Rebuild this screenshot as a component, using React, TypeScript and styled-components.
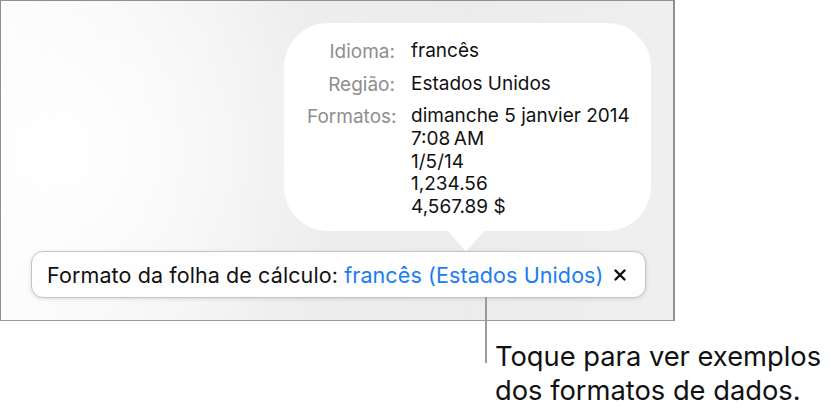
import React from "react";
import styled, { createGlobalStyle } from "styled-components";

const GlobalStyle = createGlobalStyle`
  html, body {
    margin: 0;
    padding: 0;
    background: #ffffff;
  }
  body {
    font-family: Inter, "Liberation Sans", Arial, sans-serif;
    color: #111111;
  }
`;

interface IRow {
  label: string;
  values: string[];
}

const rows: IRow[] = [
  { label: "Idioma:", values: ["francês"] },
  { label: "Região:", values: ["Estados Unidos"] },
  {
    label: "Formatos:",
    values: ["dimanche 5 janvier 2014", "7:08\u2009AM", "1/5/14", "1,234.56", "4,567.89 $"],
  },
];

const CloseIcon = (): JSX.Element => (
  <svg width="12" height="12" viewBox="0 0 12 12">
    <path d="M1.5 1.5 L10.5 10.5 M10.5 1.5 L1.5 10.5" stroke="#111" strokeWidth="2.4" strokeLinecap="round" />
  </svg>
);

const App = (): JSX.Element => {
  return (
    <Page>
      <GlobalStyle />
      <Screen>
        <Bubble>
          {rows.map((row) => (
            <InfoRow key={row.label}>
              <Label>{row.label}</Label>
              <Values>
                {row.values.map((v) => (
                  <Value key={v}>{v}</Value>
                ))}
              </Values>
            </InfoRow>
          ))}
        </Bubble>
        <FormatBar>
          <BarText>
            Formato da folha de cálculo: <Link>francês (Estados Unidos)</Link>
          </BarText>
          <CloseButton>
            <CloseIcon />
          </CloseButton>
        </FormatBar>
      </Screen>
      <Callout>
        Toque para ver exemplos
        <br />
        dos formatos de dados.
      </Callout>
    </Page>
  );
};

const Page = styled.div`
  width: 830px;
  height: 415px;
  overflow: hidden;
  display: flex;
  flex-direction: column;
`;

const Screen = styled.div`
  box-sizing: border-box;
  width: 675px;
  height: 321px;
  border: 1px solid #8f8f8f;
  border-right-width: 2px;
  border-bottom-color: #9a9a9a;
  background:
    radial-gradient(ellipse 280px 280px at 60px 150px, #ffffff 0%, rgba(255, 255, 255, 0) 100%),
    linear-gradient(to right, #fafafa 0%, #eeeeee 40%, #ececec 70%, #efefef 100%);
  display: flex;
  flex-direction: column;
  align-items: flex-start;
  padding: 22px 0 0 283px;
`;

const Bubble = styled.div`
  position: relative;
  box-sizing: border-box;
  width: 367px;
  height: 208px;
  background: #ffffff;
  border-radius: 44px;
  padding: 17px 0 0 23px;
  display: flex;
  flex-direction: column;
  gap: 9.5px;

  &::after {
    content: "";
    position: absolute;
    left: 164px;
    top: 100%;
    width: 36px;
    height: 20px;
    background: #ffffff;
    clip-path: polygon(0 0, 100% 0, 52% 100%, 48% 100%);
  }
`;

const InfoRow = styled.div`
  display: flex;
  gap: 16px;
  font-size: 19px;
`;

const Label = styled.div`
  width: 88px;
  text-align: right;
  color: #8e8e8e;
  line-height: 23px;
  white-space: nowrap;
`;

const Values = styled.div`
  display: flex;
  flex-direction: column;
`;

const Value = styled.div`
  line-height: 22.75px;
  color: #111111;
  white-space: nowrap;
`;

const FormatBar = styled.div`
  position: relative;
  box-sizing: border-box;
  margin: 20px 0 0 -253px;
  width: 615px;
  height: 47px;
  background: #fefefe;
  border: 1px solid #c4c4c4;
  border-radius: 12px;
  box-shadow: 0 1px 4px rgba(0, 0, 0, 0.12);
  display: flex;
  align-items: center;
  padding: 0 18px 0 15px;

  &::after {
    content: "";
    position: absolute;
    left: 453px;
    top: 100%;
    width: 2px;
    height: 66px;
    background: #9a9a9a;
  }
`;

const BarText = styled.div`
  flex: 1;
  font-size: 21.5px;
  letter-spacing: 0.1px;
  color: #111111;
  white-space: nowrap;
`;

const Link = styled.span`
  color: #1b7cf3;
`;

const CloseButton = styled.div`
  display: flex;
  align-items: center;
  justify-content: center;
  width: 14px;
  height: 14px;
`;

const Callout = styled.div`
  margin: 19px 0 0 495px;
  font-size: 27.3px;
  line-height: 34px;
  color: #111111;
  white-space: nowrap;
`;

export default App;
